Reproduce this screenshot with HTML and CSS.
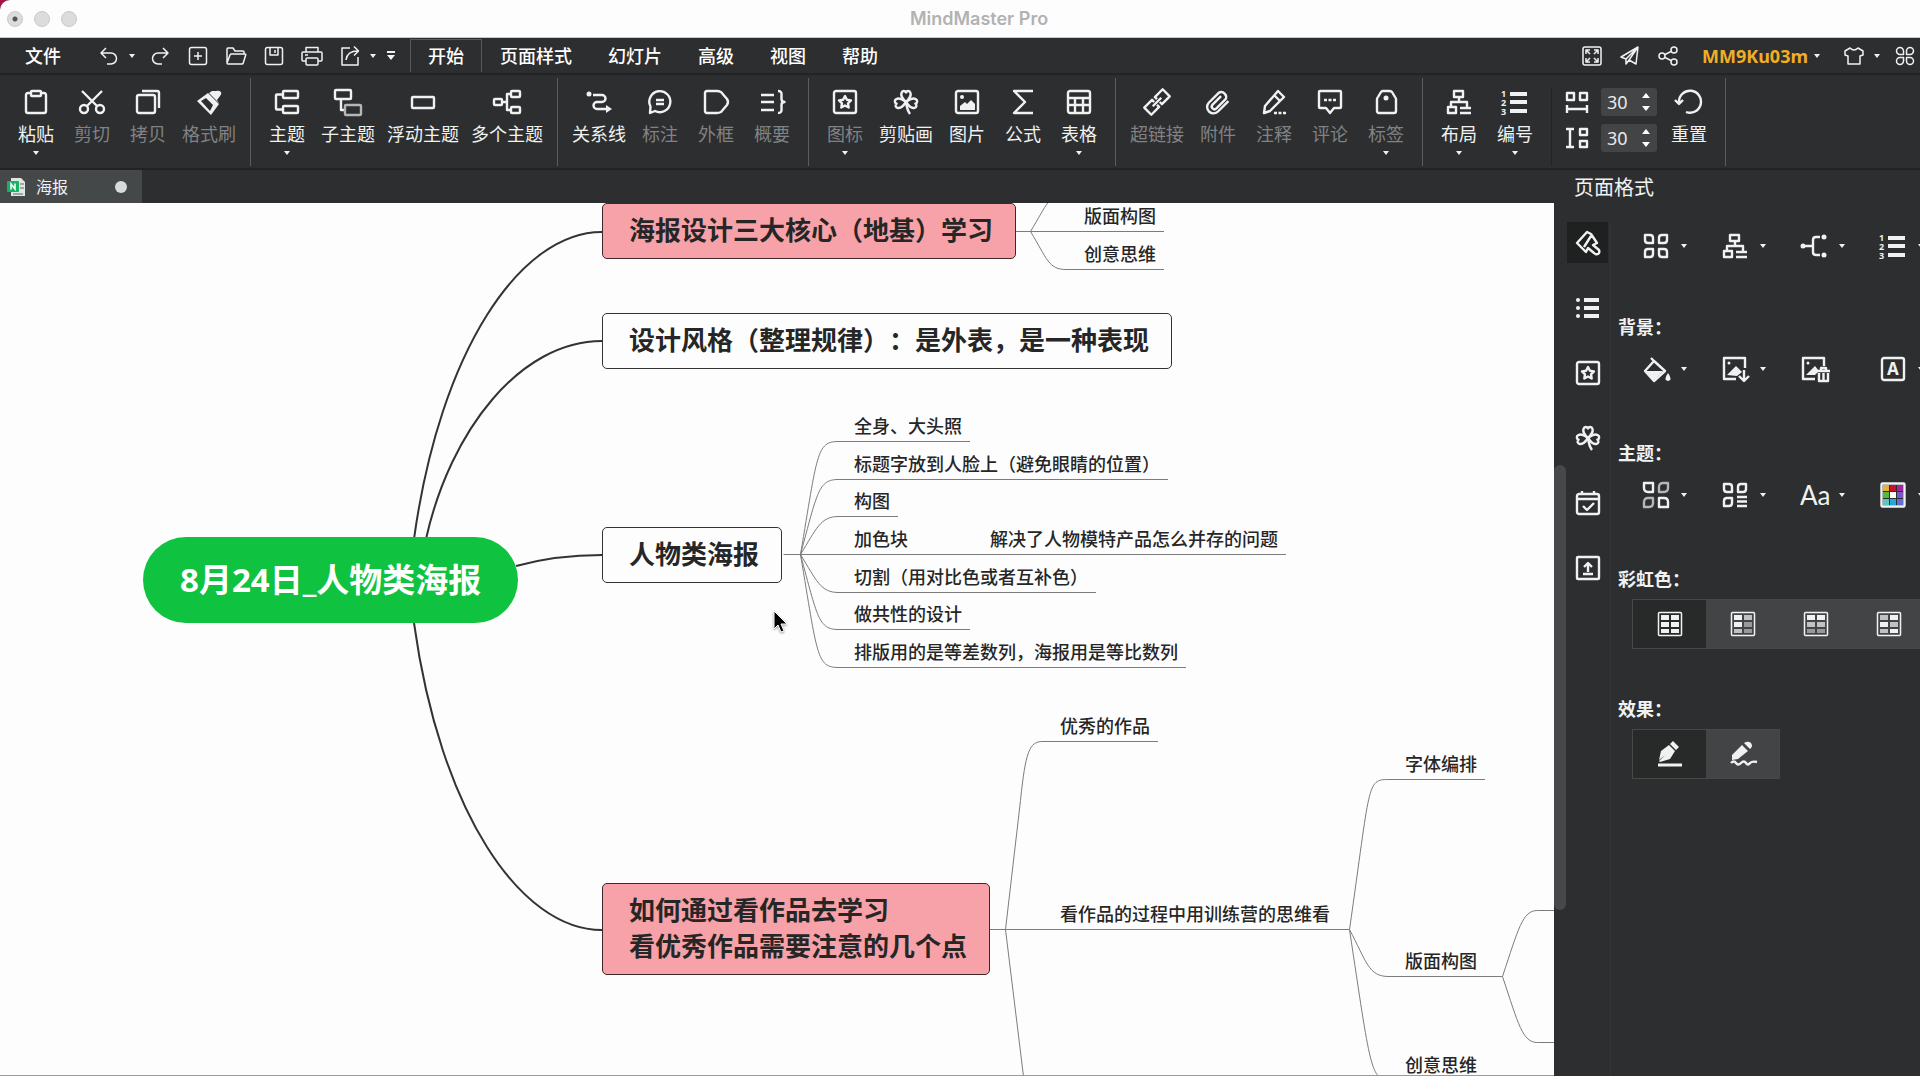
FILE: index.html
```html
<!DOCTYPE html>
<html lang="zh-CN">
<head>
<meta charset="utf-8">
<title>MindMaster Pro</title>
<link rel="stylesheet" href="styles.css">
</head>
<body>
<svg class="sprite" aria-hidden="true">
  <defs>
    <symbol id="caret" viewBox="0 0 8 6"><path class="fill" d="M1 1h6L4 5z"/></symbol>
    <symbol id="undo" viewBox="0 0 28 28"><path d="M11 6L6 11l5 5M6.500 11H16a5.500 5.500 0 0 1 0 11h-4"/></symbol>
    <symbol id="redo" viewBox="0 0 28 28"><path d="M17 6l5 5-5 5M21.500 11H12a5.500 5.500 0 0 0 0 11h4"/></symbol>
    <symbol id="new" viewBox="0 0 28 28"><rect x="5.500" y="5.500" width="17" height="17" rx="2"/><path d="M14 10v8M10 14h8"/></symbol>
    <symbol id="open" viewBox="0 0 28 28"><path d="M5 21V7q0-1 1-1h5l2 3h8q1 0 1 1v2M5 21l3-8q.4-1 1.500-1H23q1 0 .700 1l-2.500 8q-.3 1-1.200 1H6q-1 0-1-1z"/></symbol>
    <symbol id="save" viewBox="0 0 28 28"><rect x="5.500" y="5.500" width="17" height="17" rx="2"/><path d="M10 6v7h8V6M15 8v3"/></symbol>
    <symbol id="print" viewBox="0 0 28 28"><path d="M8 10V5.500h12V10M8 19H5q-1 0-1-1v-7q0-1 1-1h18q1 0 1 1v7q0 1-1 1h-3"/><rect x="8" y="16" width="12" height="7" rx="1"/><path d="M7 13h3"/></symbol>
    <symbol id="export" viewBox="0 0 28 28"><path d="M14 6H6v17h16v-8M10 18q1-9 12-9M18 4.500l4.500 4.500-4.500 4.500"/></symbol>
    <symbol id="more" viewBox="0 0 10 12"><path class="fill" d="M1 1h8v2H1zM1 5h8L5 10z"/></symbol>
    <symbol id="fullscreen" viewBox="0 0 28 28"><rect x="5" y="5" width="18" height="18" rx="2"/><path d="M8 12V8h4M8 8l4 4M16 8h4v4M20 8l-4 4M8 16v4h4M8 20l4-4M20 16v4h-4M20 20l-4-4"/></symbol>
    <symbol id="send" viewBox="0 0 28 28"><path d="M22 5L5 15l5 2L22 5l-2 17-7-4zM10 17v5l3-4"/></symbol>
    <symbol id="share" viewBox="0 0 28 28"><circle cx="8" cy="14" r="3"/><circle cx="20" cy="8" r="3"/><circle cx="20" cy="20" r="3"/><path d="M11 12.500l6-3M11 15.500l6 3"/></symbol>
    <symbol id="shirt" viewBox="0 0 28 28"><path d="M10 6q4 4 8 0l5 3 0 4-3 1v8H8v-8l-3-1V9z"/></symbol>
    <symbol id="apps" viewBox="0 0 28 28"><path d="M9 5.500a3.500 3.500 0 1 0 0 7h3.500V9A3.500 3.500 0 0 0 9 5.500zM19 5.500a3.500 3.500 0 1 1 0 7h-3.500V9A3.500 3.500 0 0 1 19 5.500zM9 22.500a3.500 3.500 0 1 1 0-7h3.500V19A3.500 3.500 0 0 1 9 22.500zM19 22.500a3.500 3.500 0 1 0 0-7h-3.500V19a3.500 3.500 0 0 0 3.500 3.500z"/></symbol>

    <symbol id="paste" viewBox="0 0 28 28"><path d="M9 5H6Q4 5 4 7v16q0 2 2 2h16q2 0 2-2V7q0-2-2-2h-3"/><rect x="9" y="3" width="10" height="5" rx="1"/></symbol>
    <symbol id="cut" viewBox="0 0 28 28"><circle cx="6" cy="21" r="4"/><circle cx="22" cy="21" r="4"/><path d="M4 3l15 15M24 3L9 18"/></symbol>
    <symbol id="copy" viewBox="0 0 28 28"><rect x="3" y="7" width="18" height="18" rx="2"/><path d="M8 3h15q2 0 2 2v15"/></symbol>
    <symbol id="painter" viewBox="0 0 28 28"><path class="fill" d="M21 3q3-1 5 1 1 2-1 4l-3 4 2 3-10-10 3-2zM13 5l11 11-8 11L2 13z"/><path class="dark" d="M6 13l5-3 7 7-3 6z"/></symbol>
    <symbol id="topic" viewBox="0 0 28 28"><rect x="10" y="3" width="15" height="7" rx="1"/><rect x="10" y="18" width="15" height="7" rx="1"/><path d="M10 6.500H4q-1 0-1 1v13q0 1 1 1h6"/></symbol>
    <symbol id="subtopic" viewBox="0 0 28 28"><rect x="1" y="2" width="16" height="9" rx="1"/><path d="M7 11v11h4"/><rect class="muted" x="11" y="17" width="16" height="10" rx="1"/></symbol>
    <symbol id="float" viewBox="0 0 28 28"><rect x="3" y="9" width="22" height="11" rx="1"/></symbol>
    <symbol id="multi" viewBox="0 0 28 28"><rect x="1" y="11" width="8" height="6" rx="1"/><rect x="18" y="3" width="9" height="6" rx="1"/><rect x="18" y="19" width="9" height="6" rx="1"/><path d="M9 14h5M18 6h-4v16h4"/></symbol>
    <symbol id="relation" viewBox="0 0 28 28"><circle class="fill" cx="4" cy="6" r="2.500"/><path d="M8 7h9a3.500 3.500 0 0 1 0 7h-5a3.500 3.500 0 0 0 0 7h10"/><path class="fill" d="M21 17l6 4-6 4z"/></symbol>
    <symbol id="callout" viewBox="0 0 28 28"><path d="M4.500 18.500A10.500 10.500 0 1 1 9 23l-5 2zM10 12h8M10 16h8"/></symbol>
    <symbol id="boundary" viewBox="0 0 28 28"><path d="M5 3h10q2 0 4 1l6 7q2 3 0 6l-6 7q-2 1-4 1H5q-2 0-2-2V5q0-2 2-2z"/></symbol>
    <symbol id="summary" viewBox="0 0 28 28"><path d="M3 7h13M3 14h13M3 22h13M20 3q4 0 3.500 4v4q0 3 3 3-3 0-3 3v4q.5 4-3.500 4"/></symbol>
    <symbol id="star" viewBox="0 0 28 28"><rect x="3" y="3" width="22" height="22" rx="2"/><path d="M14 8l1.900 3.700 4.100.7-3 2.900.7 4.200-3.700-2-3.700 2 .7-4.200-3-2.900 4.100-.7z"/></symbol>
    <symbol id="clover" viewBox="0 0 28 28"><path id="leaf" d="M14 14c-4-4-5.500-6-4.500-9 .8-2.500 3.500-2.500 4.500-.5 1-2 3.700-2 4.500.5 1 3-.5 5-4.500 9z"/><use href="#leaf" transform="rotate(-100 14 14)"/><use href="#leaf" transform="rotate(100 14 14)"/><path d="M14 14q1 8 4 12"/></symbol>
    <symbol id="image" viewBox="0 0 28 28"><rect x="3" y="3" width="22" height="22" rx="2"/><circle class="fill" cx="9" cy="9" r="2"/><path class="fill" d="M7 22v-4l5-4 2 2 4-4 4 4v6z"/></symbol>
    <symbol id="sigma" viewBox="0 0 28 28"><path d="M24 3H5l11 11L5 25h19"/></symbol>
    <symbol id="table" viewBox="0 0 28 28"><rect x="3" y="3" width="22" height="22" rx="2"/><path d="M3 10h22M3 17h22M10 10v15M18 10v15"/></symbol>
    <symbol id="link" viewBox="0 0 28 28"><g transform="rotate(-45 14 14)"><path d="M12 16v3H1V9h11v3M16 12V9h11v10H16v-3M8 14h12"/></g></symbol>
    <symbol id="clip" viewBox="0 0 28 28"><path transform="translate(2 2)" d="M22.400 11.050l-10.150 10.190a6 6 0 0 1-9.490-8.490l10.190-10.190a5 5 0 0 1 6.660 6.660l-9.200 9.190a2.500 2.500 0 0 1-3.830-3.830l8.490-8.480"/></symbol>
    <symbol id="note" viewBox="0 0 28 28"><path d="M5 18L18 3l6 6-14 14-6 2zM14 7l6 6"/><path class="dots" d="M14 25h12"/></symbol>
    <symbol id="comment" viewBox="0 0 28 28"><path d="M4 3h20q1 0 1 1v15q0 1-1 1h-6l-4 5-4-5H4q-1 0-1-1V4q0-1 1-1z"/><path class="dots" d="M8 12h12"/></symbol>
    <symbol id="tag" viewBox="0 0 28 28"><path d="M11 3h6q2 0 3 1l3 5q1 1 1 2v12q0 2-2 2H7q-2 0-2-2V11q0-1 1-2l3-5q1-1 2-1z"/><circle class="fill" cx="14" cy="10" r="2.500"/></symbol>
    <symbol id="layout" viewBox="0 0 28 28"><rect x="9" y="3" width="9" height="6"/><path d="M14 9v5M6 19v-5h16v5"/><rect x="3" y="19" width="8" height="6"/><path d="M15 20h11M15 25h11"/></symbol>
    <symbol id="number" viewBox="0 0 28 28"><text x="0" y="9">1</text><text x="0" y="18">2</text><text x="0" y="27">3</text><path class="bars" d="M9 6h17M9 14h17M9 23h17"/></symbol>
    <symbol id="space-h" viewBox="0 0 28 28"><rect x="4" y="5" width="7" height="7"/><rect x="17" y="5" width="7" height="7"/><path d="M4 17v8M24 17v8M4 21h20"/></symbol>
    <symbol id="space-v" viewBox="0 0 28 28"><path d="M3 5h8M3 23h8M7 5v18"/><rect x="17" y="5" width="7" height="6"/><rect x="17" y="17" width="7" height="6"/></symbol>
    <symbol id="reset" viewBox="0 0 28 28"><path d="M4 14A11 11 0 1 1 11 24M0 12l4 4 4-4"/></symbol>

    <symbol id="format" viewBox="0 0 28 28"><path d="M3 14L13 3l4 2 6 9-4 2 6 5q1 3-1 4-2 1-4-1l-6-5-2 4zM10 18l7-11"/></symbol>
    <symbol id="list" viewBox="0 0 28 28"><circle class="fill" cx="4" cy="6" r="2"/><circle class="fill" cx="4" cy="14" r="2"/><circle class="fill" cx="4" cy="22" r="2"/><path class="bars" d="M10 6h15M10 14h15M10 22h15"/></symbol>
    <symbol id="task" viewBox="0 0 28 28"><rect x="3" y="5" width="22" height="20" rx="2"/><path d="M8 2v4M20 2v4M3 10h22M9 17l4 4 7-7"/></symbol>
    <symbol id="upload" viewBox="0 0 28 28"><rect x="3" y="3" width="22" height="22" rx="1"/><path d="M14 18V9M10 13l4-4 4 4M9 20h10"/></symbol>
    <symbol id="petals" viewBox="0 0 28 28"><path d="M3 3h5q3 0 3 3v5H6q-3 0-3-3zM25 3v5q0 3-3 3h-5V6q0-3 3-3zM3 25v-5q0-3 3-3h5v5q0 3-3 3zM25 25h-5q-3 0-3-3v-5h5q3 0 3 3z"/></symbol>
    <symbol id="petals-mix" viewBox="0 0 28 28"><path d="M2 2h9v9H6q-4 0-4-4zM26 26h-9v-9h5q4 0 4 4z"/><path class="muted" d="M26 2v5q0 4-4 4h-5V6q0-4 4-4zM2 26v-5q0-4 4-4h5v5q0 4-4 4z"/></symbol>
    <symbol id="petals-list" viewBox="0 0 28 28"><path d="M3 3h5q3 0 3 3v5H6q-3 0-3-3zM25 3v5q0 3-3 3h-5V6q0-3 3-3zM3 25v-5q0-3 3-3h5v5q0 3-3 3zM16 16h10M16 20.500h10M16 25h10"/></symbol>
    <symbol id="branch" viewBox="0 0 28 28"><circle class="fill" cx="3" cy="14" r="2.500"/><circle class="fill" cx="24" cy="5" r="2.500"/><circle class="fill" cx="24" cy="23" r="2.500"/><path d="M3 14h10M20 5h-4q-3 0-3 3v12q0 3 3 3h4"/></symbol>
    <symbol id="bucket" viewBox="0 0 28 28"><path d="M9 3l3 3M3 16L12 6l11 10-11 10z"/><path class="fill" d="M4 16h17L12 25zM26 18q5 7 0 8-5-1 0-8z"/></symbol>
    <symbol id="image-down" viewBox="0 0 28 28"><path d="M15 24H3V3h21v10"/><circle class="fill" cx="8" cy="8" r="1.500"/><path class="fill" d="M6 20l9-9 6 6-5 4z"/><path d="M23 15v10M18 21l5 5 5-5"/></symbol>
    <symbol id="image-trash" viewBox="0 0 28 28"><path d="M15 24H3V3h21v8"/><circle class="fill" cx="8" cy="8" r="1.500"/><path class="fill" d="M6 20l9-9 4 5-4 4z"/><path d="M17 16h13M21 15v-2h5v2M19 18v8h9v-8M23.500 18v8"/></symbol>
    <symbol id="letter-box" viewBox="0 0 28 28"><rect x="3" y="3" width="22" height="22" rx="2"/><text class="letter" x="14" y="20">A</text></symbol>
    <symbol id="palette" viewBox="0 0 28 28"><rect x="2.500" y="2.500" width="23" height="23" rx="1"/><g class="swatches"><path fill="#e5b32f" d="M4 4h6v6H4z"/><path fill="#c8102e" d="M11 4h6v6h-6z"/><path fill="#a0289c" d="M18 4h6v6h-6z"/><path fill="#55b93c" d="M4 11h6v6H4z"/><path fill="#fff" d="M11 11h6v6h-6z"/><path fill="#7d55c7" d="M18 11h6v6h-6z"/><path fill="#5ec6bd" d="M4 18h6v6H4z"/><path fill="#22a7de" d="M11 18h6v6h-6z"/><path fill="#5f6fd6" d="M18 18h6v6h-6z"/></g></symbol>
    <symbol id="grid-frame" viewBox="0 0 28 28"><rect class="thin" x="2.500" y="2.500" width="23" height="23" rx="1"/></symbol>
    <symbol id="pen" viewBox="0 0 28 28"><path class="thick" d="M2 25h24"/><path class="fill" d="M17 1l6 6-3 3-6-6zM13 5l6 6-5 8-10 3-1-1 5-5 1-1-6 5 2-9z"/></symbol>
    <symbol id="pencil" viewBox="0 0 28 28"><path class="fill" d="M17 2q3-1 5 1 2 3 0 5l-1 1-6-6zM13 5l6 6-10 8-6 1 0-5z"/><path d="M2 23q3-3 5 0t5 0 5 0 4 0q2-2 7-1"/></symbol>
  </defs>
</svg>

<div class="app">
  <header class="titlebar">
    <div class="lights"><button class="light light-dirty" aria-label="关闭"></button><button class="light" aria-label="最小化"></button><button class="light" aria-label="缩放"></button></div>
    <h1 class="window-title">MindMaster Pro</h1>
  </header>

  <div class="menubar">
    <button class="file-menu">文件</button>
    <div class="quick">
      <button class="quick-btn" aria-label="撤销"><svg class="icon-thin"><use href="#undo"/></svg></button>
      <button class="quick-caret" aria-label="撤销列表"><svg class="caret"><use href="#caret"/></svg></button>
      <button class="quick-btn" aria-label="重做"><svg class="icon-thin"><use href="#redo"/></svg></button>
      <button class="quick-btn" aria-label="新建"><svg class="icon-thin"><use href="#new"/></svg></button>
      <button class="quick-btn" aria-label="打开"><svg class="icon-thin"><use href="#open"/></svg></button>
      <button class="quick-btn" aria-label="保存"><svg class="icon-thin"><use href="#save"/></svg></button>
      <button class="quick-btn" aria-label="打印"><svg class="icon-thin"><use href="#print"/></svg></button>
      <button class="quick-btn" aria-label="导出"><svg class="icon-thin"><use href="#export"/></svg></button>
      <button class="quick-caret" aria-label="导出列表"><svg class="caret"><use href="#caret"/></svg></button>
      <button class="quick-more" aria-label="更多"><svg class="more"><use href="#more"/></svg></button>
    </div>
    <nav class="tabs">
      <button class="tab tab-active">开始</button>
      <button class="tab">页面样式</button>
      <button class="tab">幻灯片</button>
      <button class="tab">高级</button>
      <button class="tab">视图</button>
      <button class="tab">帮助</button>
    </nav>
    <div class="account">
      <button class="quick-btn" aria-label="全屏"><svg class="icon-thin"><use href="#fullscreen"/></svg></button>
      <button class="quick-btn" aria-label="发送"><svg class="icon-thin"><use href="#send"/></svg></button>
      <button class="quick-btn" aria-label="分享"><svg class="icon-thin"><use href="#share"/></svg></button>
      <button class="user">MM9Ku03m<svg class="caret"><use href="#caret"/></svg></button>
      <button class="quick-btn" aria-label="皮肤"><svg class="icon-thin"><use href="#shirt"/></svg></button>
      <button class="quick-caret" aria-label="皮肤列表"><svg class="caret"><use href="#caret"/></svg></button>
      <button class="quick-btn" aria-label="应用"><svg class="icon-thin"><use href="#apps"/></svg></button>
    </div>
  </div>

  <div class="ribbon">
    <div class="group">
      <button class="tool"><svg class="icon"><use href="#paste"/></svg><span>粘贴</span><svg class="caret"><use href="#caret"/></svg></button>
      <button class="tool tool-off"><svg class="icon"><use href="#cut"/></svg><span>剪切</span></button>
      <button class="tool tool-off"><svg class="icon"><use href="#copy"/></svg><span>拷贝</span></button>
      <button class="tool tool-off"><svg class="icon"><use href="#painter"/></svg><span>格式刷</span></button>
    </div>
    <div class="group">
      <button class="tool"><svg class="icon"><use href="#topic"/></svg><span>主题</span><svg class="caret"><use href="#caret"/></svg></button>
      <button class="tool"><svg class="icon"><use href="#subtopic"/></svg><span>子主题</span></button>
      <button class="tool"><svg class="icon"><use href="#float"/></svg><span>浮动主题</span></button>
      <button class="tool"><svg class="icon"><use href="#multi"/></svg><span>多个主题</span></button>
    </div>
    <div class="group">
      <button class="tool"><svg class="icon"><use href="#relation"/></svg><span>关系线</span></button>
      <button class="tool tool-off"><svg class="icon"><use href="#callout"/></svg><span>标注</span></button>
      <button class="tool tool-off"><svg class="icon"><use href="#boundary"/></svg><span>外框</span></button>
      <button class="tool tool-off"><svg class="icon"><use href="#summary"/></svg><span>概要</span></button>
    </div>
    <div class="group">
      <button class="tool tool-off"><svg class="icon"><use href="#star"/></svg><span>图标</span><svg class="caret"><use href="#caret"/></svg></button>
      <button class="tool"><svg class="icon"><use href="#clover"/></svg><span>剪贴画</span></button>
      <button class="tool"><svg class="icon"><use href="#image"/></svg><span>图片</span></button>
      <button class="tool"><svg class="icon"><use href="#sigma"/></svg><span>公式</span></button>
      <button class="tool"><svg class="icon"><use href="#table"/></svg><span>表格</span><svg class="caret"><use href="#caret"/></svg></button>
    </div>
    <div class="group">
      <button class="tool tool-off"><svg class="icon"><use href="#link"/></svg><span>超链接</span></button>
      <button class="tool tool-off"><svg class="icon"><use href="#clip"/></svg><span>附件</span></button>
      <button class="tool tool-off"><svg class="icon"><use href="#note"/></svg><span>注释</span></button>
      <button class="tool tool-off"><svg class="icon"><use href="#comment"/></svg><span>评论</span></button>
      <button class="tool tool-off"><svg class="icon"><use href="#tag"/></svg><span>标签</span><svg class="caret"><use href="#caret"/></svg></button>
    </div>
    <div class="group">
      <button class="tool"><svg class="icon"><use href="#layout"/></svg><span>布局</span><svg class="caret"><use href="#caret"/></svg></button>
      <button class="tool"><svg class="icon"><use href="#number"/></svg><span>编号</span><svg class="caret"><use href="#caret"/></svg></button>
      <div class="spacing">
        <div class="spacing-row">
          <label for="gap-h" aria-label="水平间距"><svg class="icon"><use href="#space-h"/></svg></label>
          <div class="spin"><input id="gap-h" type="number" value="30"><div class="steps"><button aria-label="增加"><svg class="step"><path d="M1 6h8L5 1z"/></svg></button><button aria-label="减少"><svg class="step"><path d="M1 1h8L5 6z"/></svg></button></div></div>
        </div>
        <div class="spacing-row">
          <label for="gap-v" aria-label="垂直间距"><svg class="icon"><use href="#space-v"/></svg></label>
          <div class="spin"><input id="gap-v" type="number" value="30"><div class="steps"><button aria-label="增加"><svg class="step"><path d="M1 6h8L5 1z"/></svg></button><button aria-label="减少"><svg class="step"><path d="M1 1h8L5 6z"/></svg></button></div></div>
        </div>
      </div>
      <button class="tool"><svg class="icon"><use href="#reset"/></svg><span>重置</span></button>
    </div>
  </div>

  <div class="workspace">
    <main class="editor">
      <div class="doc-tabs">
        <button class="doc-tab">
          <svg class="doc-icon" viewBox="0 0 18 18"><path fill="#dfe6e3" d="M4 0h10l4 4v14H4z"/><path stroke="#5a6663" d="M13 6h4M13 10h4M6 16h10"/><rect y="3" width="12" height="11" rx="1" fill="#16b364"/><path fill="none" stroke="#fff" stroke-width="1.500" d="M4 11.500V6l4 5V5.500"/></svg>
          <span>海报</span><i class="unsaved"></i>
        </button>
      </div>
      <div class="canvas-row">
        <div class="canvas">
          <svg class="wires">
            <g class="main-wires">
              <path d="M414 336C440 148 520 29 602 29M426 336C450 228 520 138 602 138M516 363C545 355 570 352 602 352M414 420C440 608 520 727 602 727"/>
            </g>
            <g class="thin-wires" transform="translate(.5 .5)">
              <path d="M1015 28h51M1030 28C1047 0 1048-9 1066-9M1030 28C1047 56 1048 66 1066 66"/>
              <path d="M783 351h55M800 351C817 250 816 238 838 238M800 351C817 288 818 276 838 276M800 351C816 325 820 313 838 313M800 351C816 377 820 389 838 389M800 351C817 414 818 426 838 426M800 351C817 452 816 464 838 464"/>
              <path d="M989 726h53M1005 726L1020 597C1025 548 1029 538 1042 538M1005 726L1023 873"/>
              <path d="M1349 726C1370 580 1366 576 1388 576M1349 726C1366 758 1368 773 1388 773M1349 726C1370 865 1370 877 1390 877"/>
              <path d="M1480 773H1502C1518 725 1522 707 1537 707H1554M1502 773C1518 821 1522 839 1537 839H1554"/>
            </g>
          </svg>
          <div class="node root" style="left:143px;top:334px">8月24日_人物类海报</div>
          <div class="node box pink" style="left:602px;top:0">海报设计三大核心（地基）学习</div>
          <div class="node box" style="left:602px;top:110px">设计风格（整理规律）：是外表，是一种表现</div>
          <div class="node box" style="left:602px;top:324px">人物类海报</div>
          <div class="node box pink" style="left:602px;top:680px">如何通过看作品去学习<br>看优秀作品需要注意的几个点</div>

          <div class="node leaf" style="left:1066px;top:-1px">版面构图</div>
          <div class="node leaf" style="left:1066px;top:37px">创意思维</div>
          <div class="node leaf" style="left:836px;top:209px">全身、大头照</div>
          <div class="node leaf" style="left:836px;top:247px">标题字放到人脸上（避免眼睛的位置）</div>
          <div class="node leaf" style="left:836px;top:284px">构图</div>
          <div class="node leaf" style="left:836px;top:322px">加色块</div>
          <div class="node leaf leaf-next" style="left:908px;top:322px">解决了人物模特产品怎么并存的问题</div>
          <div class="node leaf" style="left:836px;top:360px">切割（用对比色或者互补色）</div>
          <div class="node leaf" style="left:836px;top:397px">做共性的设计</div>
          <div class="node leaf" style="left:836px;top:435px">排版用的是等差数列，海报用是等比数列</div>
          <div class="node leaf" style="left:1042px;top:509px">优秀的作品</div>
          <div class="node leaf leaf-fork" style="left:1042px;top:697px">看作品的过程中用训练营的思维看</div>
          <div class="node leaf" style="left:1387px;top:547px">字体编排</div>
          <div class="node leaf leaf-fork" style="left:1387px;top:744px">版面构图</div>
          <div class="node leaf" style="left:1387px;top:848px">创意思维</div>
          <svg class="cursor" style="left:772px;top:407px" viewBox="0 0 16 24"><path d="M2 1v18l4-4 3 7 3-1-3-7h6z"/></svg>
        </div>
        <div class="scroll"><div class="thumb"></div></div>
      </div>
    </main>

    <aside class="side">
      <h2 class="side-title">页面格式</h2>
      <div class="side-body">
        <div class="rail">
          <button class="rail-btn rail-on" aria-label="页面格式"><svg class="icon"><use href="#format"/></svg></button>
          <button class="rail-btn" aria-label="大纲"><svg class="icon"><use href="#list"/></svg></button>
          <button class="rail-btn" aria-label="图标"><svg class="icon"><use href="#star"/></svg></button>
          <button class="rail-btn" aria-label="剪贴画"><svg class="icon"><use href="#clover"/></svg></button>
          <button class="rail-btn" aria-label="任务"><svg class="icon"><use href="#task"/></svg></button>
          <button class="rail-btn" aria-label="上传"><svg class="icon"><use href="#upload"/></svg></button>
        </div>
        <div class="panel">
          <div class="row">
            <button class="pick" aria-label="布局样式"><svg class="icon"><use href="#petals"/></svg><svg class="caret"><use href="#caret"/></svg></button>
            <button class="pick" aria-label="结构"><svg class="icon"><use href="#layout"/></svg><svg class="caret"><use href="#caret"/></svg></button>
            <button class="pick" aria-label="连线"><svg class="icon"><use href="#branch"/></svg><svg class="caret"><use href="#caret"/></svg></button>
            <button class="pick" aria-label="编号"><svg class="icon"><use href="#number"/></svg><svg class="caret"><use href="#caret"/></svg></button>
          </div>
          <h3 class="label">背景：</h3>
          <div class="row">
            <button class="pick" aria-label="填充"><svg class="icon"><use href="#bucket"/></svg><svg class="caret"><use href="#caret"/></svg></button>
            <button class="pick" aria-label="插入背景图"><svg class="icon"><use href="#image-down"/></svg><svg class="caret"><use href="#caret"/></svg></button>
            <button class="pick" aria-label="移除背景图"><svg class="icon"><use href="#image-trash"/></svg></button>
            <button class="pick" aria-label="水印"><svg class="icon"><use href="#letter-box"/></svg><svg class="caret"><use href="#caret"/></svg></button>
          </div>
          <h3 class="label">主题：</h3>
          <div class="row">
            <button class="pick" aria-label="主题"><svg class="icon"><use href="#petals-mix"/></svg><svg class="caret"><use href="#caret"/></svg></button>
            <button class="pick" aria-label="主题列表"><svg class="icon"><use href="#petals-list"/></svg><svg class="caret"><use href="#caret"/></svg></button>
            <button class="pick pick-font">Aa<svg class="caret"><use href="#caret"/></svg></button>
            <button class="pick" aria-label="颜色"><svg class="icon"><use href="#palette"/></svg><svg class="caret"><use href="#caret"/></svg></button>
          </div>
          <h3 class="label">彩虹色：</h3>
          <div class="segments">
            <label class="segment"><input type="radio" name="rainbow" checked aria-label="单色"><svg class="icon"><use href="#grid-frame"/><path class="cells" d="M5 5h8v5H5zM15 5h8v5h-8zM5 12h8v5H5zM15 12h8v5h-8zM5 19h8v4H5zM15 19h8v4h-8z"/></svg></label>
            <label class="segment"><input type="radio" name="rainbow" aria-label="按列"><svg class="icon"><use href="#grid-frame"/><path class="cells" d="M5 5h8v5H5zM5 12h8v5H5z"/><path class="cells soft" d="M15 5h8v5h-8zM5 19h8v4H5z"/><path class="cells faint" d="M15 12h8v5h-8zM15 19h8v4h-8z"/></svg></label>
            <label class="segment"><input type="radio" name="rainbow" aria-label="按行"><svg class="icon"><use href="#grid-frame"/><path class="cells" d="M5 5h8v5H5zM15 5h8v5h-8z"/><path class="cells soft" d="M5 12h8v5H5zM15 12h8v5h-8z"/><path class="cells faint" d="M5 19h8v4H5zM15 19h8v4h-8z"/></svg></label>
            <label class="segment"><input type="radio" name="rainbow" aria-label="交错"><svg class="icon"><use href="#grid-frame"/><path class="cells" d="M15 5h8v5h-8zM5 12h8v5H5zM15 19h8v4h-8z"/><path class="cells soft" d="M5 5h8v5H5zM15 12h8v5h-8zM5 19h8v4H5z"/></svg></label>
          </div>
          <h3 class="label">效果：</h3>
          <div class="segments">
            <label class="segment"><input type="radio" name="effect" checked aria-label="钢笔"><svg class="icon"><use href="#pen"/></svg></label>
            <label class="segment"><input type="radio" name="effect" aria-label="手绘"><svg class="icon"><use href="#pencil"/></svg></label>
          </div>
        </div>
      </div>
    </aside>
  </div>
</div>
</body>
</html>
```

FILE: styles.css
```css
* { box-sizing: border-box; }

body {
  margin: 0;
  background: #a8124a;
  color: #f0f2f2;
  font: 18px/24px "Noto Sans", "Noto Sans CJK SC", sans-serif;
  text-spacing-trim: space-all;
}

button {
  margin: 0;
  padding: 0;
  border: 0;
  background: none;
  color: inherit;
  font: inherit;
  white-space: nowrap;
}

h1, h2, h3 { margin: 0; }

.sprite { position: absolute; width: 0; height: 0; }

.app {
  display: flex;
  flex-direction: column;
  height: 100vh;
  border-top-left-radius: 10px;
  background: #2d2e30;
  overflow: hidden;
}

/* icons */
.icon, .icon-thin {
  display: block;
  flex: none;
  width: 28px;
  height: 28px;
  overflow: visible;
  fill: none;
  stroke: #f0f2f2;
  stroke-width: 2.400;
  stroke-linejoin: round;
}
.icon-thin { stroke-width: 1.500; }
symbol { overflow: visible; }
.fill { fill: #f0f2f2; stroke: none; }
.dark { fill: #2d2e30; stroke: none; }
.muted { stroke: #b4b6b7; }
.thin { stroke-width: 1.500; }
.thick { stroke-width: 3; }
.bars { stroke-width: 4; }
.dots { stroke-dasharray: 3 1.500; }
.swatches { stroke: none; }
symbol text {
  fill: #f0f2f2;
  stroke: none;
  font: 700 9px "Noto Sans", sans-serif;
}
symbol .letter { font-size: 17px; text-anchor: middle; }
.cells { fill: #f0f2f2; stroke: none; }
.soft { fill: #bfc1c2; }
.faint { fill: #98999b; }
.caret { display: block; flex: none; width: 8px; height: 6px; }
.more { display: block; width: 10px; height: 12px; }

/* title bar */
.titlebar {
  display: grid;
  grid-template-columns: 1fr auto 1fr;
  align-items: center;
  flex: none;
  height: 38px;
  background: #fdfdfd;
  border-bottom: 1px solid #c8c8c8;
}
.lights { display: flex; gap: 11px; padding-left: 7px; }
.light {
  width: 16px;
  height: 16px;
  border: 1px solid #c9c9c9;
  border-radius: 50%;
  background: #dcdcdc;
}
.light-dirty { background: radial-gradient(circle, #555 2px, #dcdcdc 3px); }
.window-title {
  grid-column: 2;
  padding-left: 38px;
  color: #b2b2b2;
  font: 600 18px/24px Inter, sans-serif;
}

/* menu bar */
.menubar {
  display: flex;
  align-items: center;
  flex: none;
  height: 37px;
  border-bottom: 2px solid #222324;
  color: #fff;
}
.file-menu { width: 90px; padding-left: 25px; text-align: left; font-weight: 500; }
.quick { display: flex; align-items: center; width: 320px; }
.quick-btn { display: grid; place-items: center; width: 38px; height: 32px; }
.quick-caret { display: grid; place-items: center; width: 18px; height: 32px; margin-left: -5px; }
.quick-more { display: grid; place-items: center; width: 18px; height: 32px; }
.tabs { display: flex; }
.tab {
  height: 33px;
  padding: 0 18px;
  font-weight: 500;
}
.tab-active { box-shadow: inset 1px 1px #58595b, inset -1px 0 #58595b; }
.account { display: flex; align-items: center; margin-left: auto; margin-right: -4px; }
.user {
  display: flex;
  align-items: center;
  gap: 5px;
  margin: 0 14px 0 15px;
  color: #f0ae26;
  font-weight: 700;
}

/* ribbon */
.ribbon {
  display: flex;
  align-items: center;
  flex: none;
  height: 95px;
  border-bottom: 2px solid #222324;
}
.group {
  display: flex;
  height: 88px;
  padding: 10px 8px 0;
  border-right: 1px solid #5c5d5f;
}
.tool {
  display: flex;
  flex-direction: column;
  align-items: center;
  min-width: 56px;
  padding: 0 6px;
}
.tool span { margin: 6px 0 4px; }
.tool-off { color: #808284; }
.spacing {
  display: flex;
  flex-direction: column;
  gap: 8px;
  margin-left: 8px;
  padding: 0 4px 0 11px;
  border-left: 1px solid #222324;
}
.spacing-row { display: flex; align-items: center; gap: 10px; }
.spin {
  display: flex;
  width: 56px;
  height: 28px;
  border-radius: 3px;
  background: #434446;
}
.spin input {
  width: 36px;
  padding: 0 0 0 6px;
  border: 0;
  background: none;
  color: #e8eaea;
  font: inherit;
  appearance: textfield;
  -moz-appearance: textfield;
}
.spin input::-webkit-inner-spin-button { display: none; }
.steps { display: flex; flex-direction: column; justify-content: center; gap: 6px; padding-left: 4px; }
.step { display: block; width: 10px; height: 7px; fill: #fff; }

/* document area */
.workspace { display: flex; flex: 1; min-height: 0; }
.editor { display: flex; flex-direction: column; flex: 1; min-width: 0; }
.doc-tabs { display: flex; flex: none; height: 33px; }
.doc-tab {
  display: flex;
  align-items: center;
  width: 142px;
  padding: 0 15px 0 7px;
  background: #454849;
  font-size: 16px;
}
.doc-icon { width: 18px; height: 18px; margin-right: 11px; }
.unsaved { width: 12px; height: 12px; margin-left: auto; border-radius: 50%; background: #d8dadb; }
.canvas-row { display: flex; flex: 1; min-height: 0; }
.canvas {
  position: relative;
  flex: 1;
  background: #fdfdfd;
  border-bottom: 1px solid #9a9a9a;
  overflow: hidden;
  color: #262626;
}
.scroll { width: 12px; padding-top: 262px; }
.thumb { height: 445px; border-radius: 6px; background: #47484a; }

/* mind map */
.wires { position: absolute; inset: 0; width: 100%; height: 100%; fill: none; }
.main-wires { stroke: #333; stroke-width: 2; }
.thin-wires { stroke: #7c7c7c; stroke-width: 1; }
.node { position: absolute; white-space: nowrap; }
.root {
  padding: 0 37px;
  border-radius: 43px;
  background: #0fc23f;
  color: #fff;
  font-size: 33px;
  font-weight: 700;
  line-height: 86px;
}
.box {
  padding: 8px 22px 10px 26px;
  border: 1px solid #333;
  border-radius: 5px;
  background: #fdfdfd;
  font-size: 26px;
  font-weight: 700;
  line-height: 36px;
}
.pink { background: #f7a1a8; border-color: #40282a; }
.leaf {
  height: 30px;
  padding: 2px 8px 0 18px;
  border-bottom: 1px solid #7c7c7c;
  font-weight: 500;
}
.leaf-next { padding-left: 82px; }
.leaf-fork { padding-right: 19px; }
.cursor {
  position: absolute;
  width: 16px;
  height: 24px;
  stroke: #fff;
  filter: drop-shadow(0 1px 1px #0006);
}

/* format panel */
.side { width: 354px; overflow: hidden; }
.side-title { padding: 6px 8px 22px; font-size: 20px; font-weight: 400; }
.side-body { display: flex; height: 100%; }
.rail {
  display: flex;
  flex-direction: column;
  gap: 24px;
  flex: none;
  width: 45px;
  padding-left: 1px;
  border-right: 1px solid #343537;
}
.rail-btn { display: grid; place-items: center; width: 41px; height: 41px; }
.rail-on { background: #1f2120; }
.panel { flex: none; width: 400px; padding: 10px 0 0 7px; }
.row { display: flex; height: 28px; padding-left: 24px; }
.pick { display: flex; align-items: center; gap: 10px; width: 79px; }
.pick-font { gap: 7px; font: 26px/28px Lato, sans-serif; }
.label { font-size: 18px; font-weight: 700; }
.row + .label { margin: 58px 0 16px; }
.row:first-child + .label { margin-top: 55px; }
.segments + .label { margin: 48px 0 8px; }
.row + .label:has(+ .segments) { margin-bottom: 8px; }
.segments { display: flex; width: max-content; margin-left: 14px; border: 1px solid #47484a; }
.segment { display: grid; place-items: center; width: 73px; height: 48px; background: #434446; }
.segment:has(:checked) { background: #282a29; }
.segment input { position: absolute; appearance: none; margin: 0; }
```
